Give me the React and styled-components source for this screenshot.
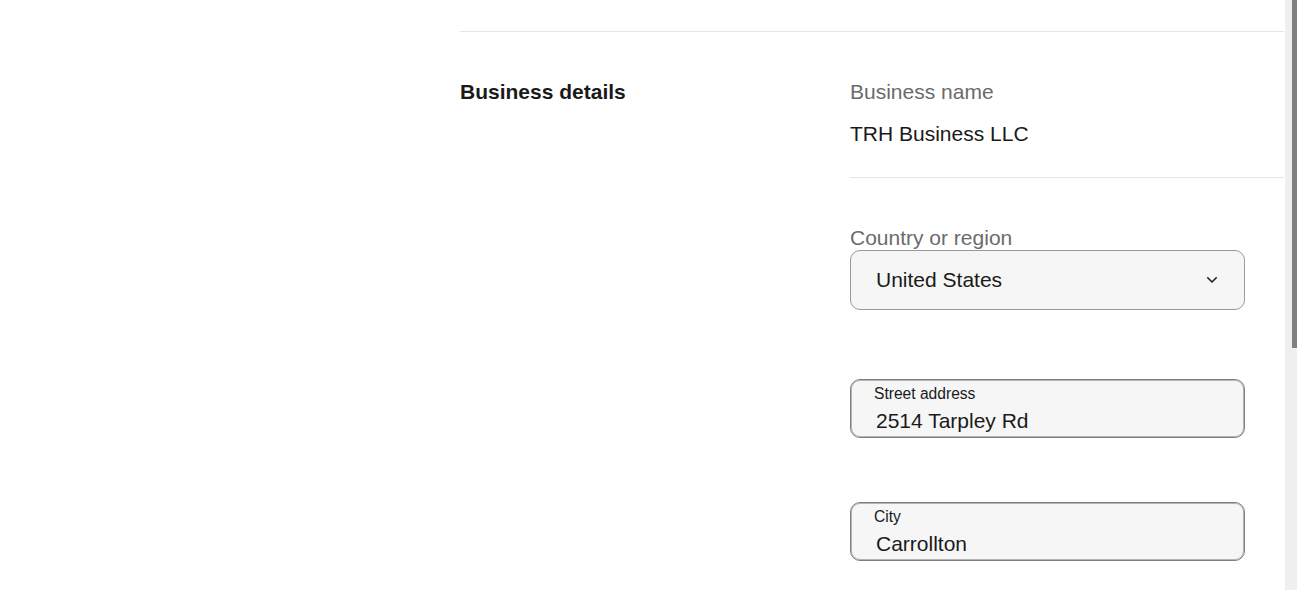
import React from "react";
import styled, { createGlobalStyle } from "styled-components";

const Global = createGlobalStyle`
  html, body { margin: 0; padding: 0; background: #ffffff; overflow: hidden; }
  body { font-family: "Liberation Sans", Arial, sans-serif; color: #1a1a1a; }
`;

const Page = styled.div`
  padding: 31px 13px 0 460px;
  min-height: 590px;
  box-sizing: border-box;
`;

const Section = styled.section`
  display: grid;
  grid-template-columns: 390px 1fr;
  border-top: 1px solid #e5e5e5;
  padding-top: 46px;
`;

const SectionTitle = styled.h2`
  margin: 0;
  font-size: 21px;
  line-height: 28px;
  font-weight: 700;
  color: #1a1a1a;
`;

const Fields = styled.div`
  display: flex;
  flex-direction: column;
`;

const ReadOnlyField = styled.div`
  padding-bottom: 29px;
  border-bottom: 1px solid #e5e5e5;
`;

const Label = styled.div`
  font-size: 21px;
  line-height: ${(p) => p.$lh || 28}px;
  color: #6b6b6b;
`;

const Value = styled.div`
  margin-top: 14px;
  font-size: 21px;
  line-height: 28px;
  color: #1a1a1a;
`;

const FieldGroup = styled.div`
  padding-top: 48px;
  display: flex;
  flex-direction: column;
`;

const Select = styled.div`
  width: 395px;
  height: 60px;
  box-sizing: border-box;
  display: flex;
  align-items: center;
  justify-content: space-between;
  padding: 0 27px 0 25px;
  background: #f6f6f6;
  border: 1px solid #9a9a9a;
  border-radius: 10px;
  font-size: 21px;
  color: #1a1a1a;
`;

const Chevron = styled.svg`
  display: block;
  width: 10px;
  height: 6px;
`;

const InputBox = styled.div`
  width: 395px;
  box-sizing: border-box;
  margin-top: ${(p) => p.$gap}px;
  padding: 5px 22px 4px 23px;
  background: #f6f6f6;
  border: 1px solid #7f7f7f;
  box-shadow: inset 0 0 0 1px #b4b4b4;
  border-radius: 10px;
`;

const FloatLabel = styled.div`
  font-size: 15.6px;
  line-height: 18px;
  color: #1a1a1a;
`;

const InputValue = styled.div`
  margin-top: 6px;
  padding-left: 2px;
  font-size: 21px;
  line-height: 24px;
  color: #1a1a1a;
`;

const ScrollTrack = styled.div`
  position: fixed;
  top: 0;
  right: 0;
  width: 12px;
  height: 100vh;
  background: #efefef;
`;

const ScrollThumb = styled.div`
  position: absolute;
  top: 0;
  right: 0;
  width: 5px;
  height: 348px;
  background: #808080;
`;

export default function App() {
  return (
    <>
      <Global />
      <Page>
        <Section>
          <SectionTitle>Business details</SectionTitle>
          <Fields>
            <ReadOnlyField>
              <Label>Business name</Label>
              <Value>TRH Business LLC</Value>
            </ReadOnlyField>
            <FieldGroup>
              <Label $lh={24}>Country or region</Label>
              <Select>
                <span>United States</span>
                <Chevron viewBox="0 0 10 6" fill="none">
                  <path
                    d="M0.75 0.75 L5 5 L9.25 0.75"
                    stroke="#1a1a1a"
                    strokeWidth="1.5"
                    strokeLinecap="round"
                    strokeLinejoin="round"
                  />
                </Chevron>
              </Select>
              <InputBox $gap={69}>
                <FloatLabel>Street address</FloatLabel>
                <InputValue>2514 Tarpley Rd</InputValue>
              </InputBox>
              <InputBox $gap={64}>
                <FloatLabel>City</FloatLabel>
                <InputValue>Carrollton</InputValue>
              </InputBox>
            </FieldGroup>
          </Fields>
        </Section>
      </Page>
      <ScrollTrack>
        <ScrollThumb />
      </ScrollTrack>
    </>
  );
}
